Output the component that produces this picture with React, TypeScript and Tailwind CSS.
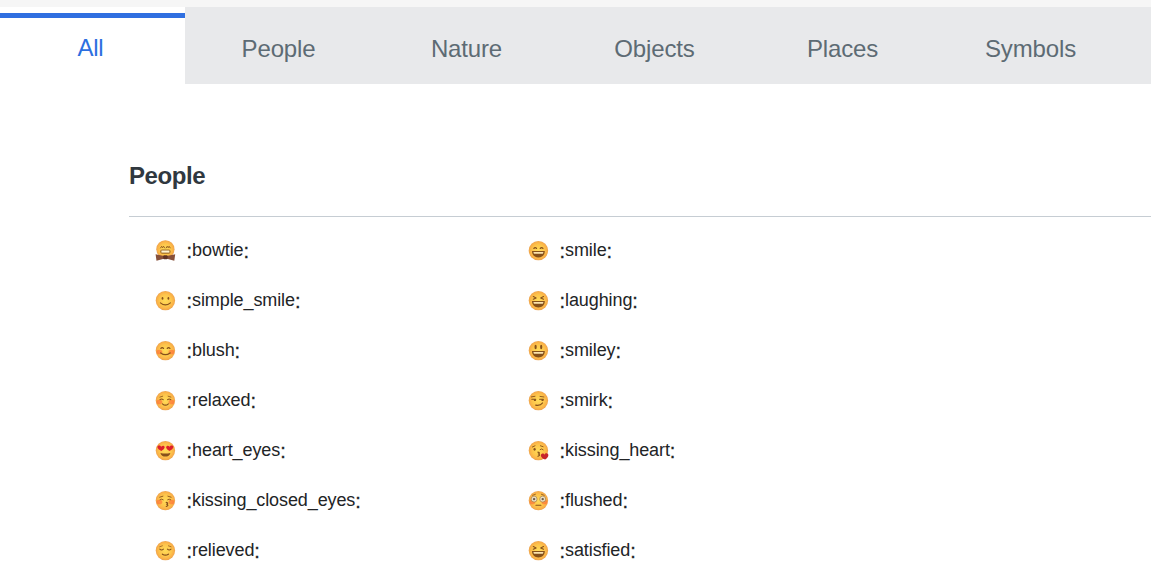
import React from "react";

const brown = "#86501b";

const stroke = {
  fill: "none",
  stroke: brown,
  strokeWidth: 1.1,
  strokeLinecap: "round" as const,
  strokeLinejoin: "round" as const,
};

function Blush() {
  return (
    <g fill="#ff5a34" opacity="0.5">
      <ellipse cx="4" cy="11.4" rx="2.9" ry="2.3" />
      <ellipse cx="16" cy="11.4" rx="2.9" ry="2.3" />
    </g>
  );
}

function Grin() {
  return (
    <g>
      <path d="M3.6 10.4h12.8c0 4.2-2.7 6.4-6.4 6.4s-6.4-2.2-6.4-6.4z" fill={brown} />
      <path d="M5 11.5h10l-.5 1.7h-9z" fill="#fbe3ae" />
    </g>
  );
}

const arcs = <path {...stroke} strokeWidth={1.3} d="M5.5 7.8q1.3-1.7 2.6 0M11.9 7.8q1.3-1.7 2.6 0" />;
const squint = <path {...stroke} d="M4.9 6l2.8 1.3-2.8 1.4M15.1 6l-2.8 1.3 2.8 1.4" />;
const lids = <path {...stroke} d="M4.4 8.6q1.8 1.5 3.6 0M12 8.6q1.8 1.5 3.6 0" />;

const faces: Record<string, React.ReactNode> = {
  bowtie: (
    <>
      <path {...stroke} strokeWidth={0.9} d="M5.2 7.3l1.1-1.6.9 1.4 1-1.4 1 1.6M10.8 7.3l1-1.6 1 1.4.9-1.4 1.1 1.6" />
      <rect x="4.8" y="8.9" width="10.4" height="4.3" rx="2" fill="#a06a25" />
      <path d="M6 9.9h8v2.1H6z" fill="#fff3d0" />
      <path d="M.2 13.6l8.3 1.9h3l8.3-1.9-.9 6.6-7.4-2h-3l-7.4 2z" fill="#87503a" />
      <rect x="7.8" y="14.7" width="4.4" height="4" rx="1" fill="#5f3123" />
    </>
  ),
  simple_smile: (
    <>
      <ellipse cx="7.1" cy="7.8" rx=".9" ry="1.3" fill={brown} />
      <ellipse cx="13" cy="7.8" rx=".9" ry="1.3" fill={brown} />
      <path {...stroke} d="M5 12.2q5 4.2 10 0" />
    </>
  ),
  blush: (
    <>
      <Blush />
      {arcs}
      <path {...stroke} strokeWidth={1.3} d="M5.3 12.3q4.7 3.6 9.4 0" />
    </>
  ),
  relaxed: (
    <>
      <Blush />
      <path {...stroke} strokeWidth={0.8} d="M4.5 6.5l2.8-.9M15.5 6.5l-2.8-.9" />
      <path {...stroke} d="M4.6 9.1q1.6-1.4 3.2 0M12.2 9.1q1.6-1.4 3.2 0" />
      <path {...stroke} d="M7 13.2q3 2.8 6 0" />
    </>
  ),
  heart_eyes: (
    <>
      <path d="M5.9 10.3C1.2 8.3 1.4 5.3 3.3 5c1-.2 2 .3 2.5 1.2.7-.9 1.8-1.3 2.7-.8 1.7 1 .4 3.6-2.6 4.9zM14.1 10.3c-3-1.3-4.3-3.9-2.6-4.9.9-.5 2-.1 2.7.8.5-.9 1.5-1.4 2.5-1.2 1.9.3 2.1 3.3-2.6 5.3z" fill="#dd202d" />
      <path d="M5 12.3q5 1.4 10 0c-.7 4.8-9.3 4.8-10 0z" fill={brown} />
    </>
  ),
  kissing_closed_eyes: (
    <>
      <Blush />
      <path {...stroke} strokeWidth={0.9} d="M4.3 6.6l3.2-1M15.7 6.6l-3.2-1M4.6 9.1q1.6-1.3 3.2 0M12.2 9.1q1.6-1.3 3.2 0" />
      <path {...stroke} strokeWidth={1.2} d="M10.8 11.7q2.7.6.5 1.9 2.5 1-.4 2.3" />
    </>
  ),
  relieved: (
    <>
      <path {...stroke} strokeWidth={0.7} d="M4.3 6.2l2.7-1M15.7 6.2l-2.7-1" />
      {lids}
      <path {...stroke} strokeWidth={1.3} d="M7 13.6q3 1.9 6 0" />
    </>
  ),
  smile: (
    <>
      {arcs}
      <Grin />
    </>
  ),
  laughing: (
    <>
      {squint}
      <Grin />
    </>
  ),
  smiley: (
    <>
      <ellipse cx="7.2" cy="6.4" rx="1.1" ry="2.3" fill={brown} />
      <ellipse cx="12.8" cy="6.4" rx="1.1" ry="2.3" fill={brown} />
      <Grin />
    </>
  ),
  smirk: (
    <>
      <path {...stroke} strokeWidth={0.9} d="M3 6.3l3.6-.6M11.6 5.8l3.9.6" />
      <path {...stroke} d="M3.4 8.7h3.9M11.2 8.7H15" />
      <path d="M5.5 8.7h2v1.7h-2zM13.1 8.7h2v1.7h-2z" fill={brown} />
      <path {...stroke} strokeWidth={1.3} d="M7.3 14.6q4.7.8 6.8-2.2" />
    </>
  ),
  kissing_heart: (
    <>
      <path {...stroke} strokeWidth={0.9} d="M4 6.4l2.6-1.2M12 5.2l2.7.9M11.7 8.9q1.6-1.5 3.1.2" />
      <ellipse cx="6.2" cy="8.7" rx="1.1" ry="1.4" fill={brown} />
      <path {...stroke} strokeWidth={1.2} d="M9.5 11.5q2.7.6.5 1.9 2.5 1-.4 2.3" />
      <path d="M16.8 19c-4.4-1.4-5.3-4.9-3.3-5.8 1.3-.6 2.1.1 2.6.9.5-1.2 1.6-1.7 2.8-1.2 2.1 1 1 4.1-2.1 6.1z" fill="#c7252c" />
    </>
  ),
  flushed: (
    <>
      <Blush />
      <path {...stroke} strokeWidth={0.8} d="M4.2 4.7l2.8-1M15.8 4.7l-2.8-1" />
      <circle cx="5.7" cy="8.5" r="3" fill="#eadfc4" stroke="#a67b41" strokeWidth=".7" />
      <circle cx="14.3" cy="8.5" r="3" fill="#eadfc4" stroke="#a67b41" strokeWidth=".7" />
      <circle cx="5.7" cy="8.5" r="1.2" fill="#6b5a4c" />
      <circle cx="14.3" cy="8.5" r="1.2" fill="#6b5a4c" />
      <path {...stroke} d="M7.5 14.7h5" />
    </>
  ),
  satisfied: (
    <>
      {squint}
      <Grin />
    </>
  ),
};

function Face({ name }: { name: string }) {
  const tied = name === "bowtie";
  return (
    <svg width="20" height="20" viewBox="-0.4 -0.6 20 20" className="shrink-0 overflow-visible" aria-hidden="true">
      <defs>
        <radialGradient id={`skin-${name}`} cx=".5" cy=".5" r=".52">
          <stop offset="0" stopColor="#ffdc58" />
          <stop offset=".6" stopColor="#fdc44b" />
          <stop offset=".86" stopColor="#f9ae48" />
          <stop offset="1" stopColor="#e09a4c" />
        </radialGradient>
      </defs>
      <circle cx="10" cy={tied ? 8.7 : 10} r={tied ? 9.1 : 9.7} fill={`url(#skin-${name})`} />
      {faces[name]}
    </svg>
  );
}

const tabs = ["People", "Nature", "Objects", "Places", "Symbols"];

const names = [
  "bowtie", "smile",
  "simple_smile", "laughing",
  "blush", "smiley",
  "relaxed", "smirk",
  "heart_eyes", "kissing_heart",
  "kissing_closed_eyes", "flushed",
  "relieved", "satisfied",
];

export default function App() {
  return (
    <div className="h-[564px] w-full overflow-hidden bg-white font-['Liberation_Sans',Arial,sans-serif]">
      <div className="h-[7px] bg-[#f6f6f6]" />
      <nav className="flex h-[77px] bg-[#e8e9eb] text-2xl text-[#5d6b74]">
        <div className="flex w-[185px] shrink-0 flex-col bg-white pt-1.5 text-[#2c6fe0]">
          <div className="h-[5px] bg-[#2f6fe0]" />
          <button className="pt-3.5 pr-1 tracking-[-0.3px]">All</button>
        </div>
        {tabs.map((tab) => (
          <button key={tab} className="w-[188px] shrink-0 pt-[7px] pr-[1px] tracking-[-0.15px]">
            {tab}
          </button>
        ))}
      </nav>
      <main className="pt-[75px] pl-[129px]">
        <h2 className="h-[58px] border-b border-[#c6cdd3] text-2xl leading-[34px] font-bold tracking-[-0.4px] text-[#30383f]">
          People
        </h2>
        <ul className="grid grid-cols-[373px_373px] pt-2 pl-[26px]">
          {names.map((name) => (
            <li key={name} className="flex h-[50px] items-center text-lg text-[#222426]">
              <Face name={name} />
              <span className="ml-[11.5px] flex items-center tracking-[-0.1px]">
                <span className="pt-px text-xl tracking-normal [-webkit-text-stroke:0.3px]">:</span>
                <span>{name}</span>
                <span className="pt-px text-xl tracking-normal [-webkit-text-stroke:0.3px]">:</span>
              </span>
            </li>
          ))}
        </ul>
      </main>
    </div>
  );
}
